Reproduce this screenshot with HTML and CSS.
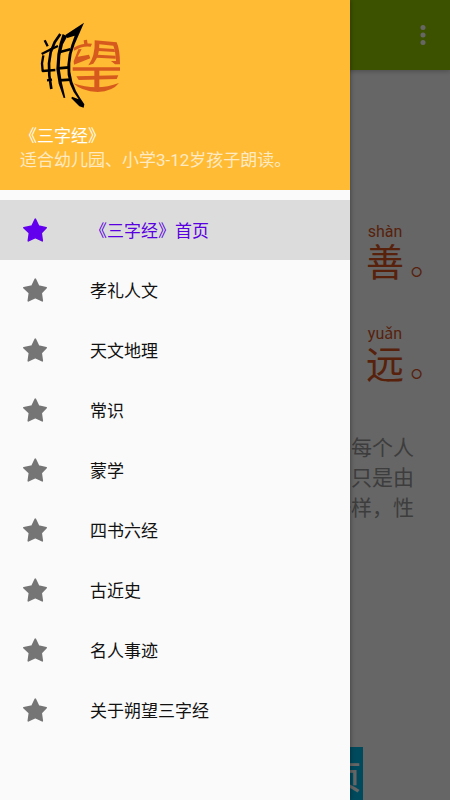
FILE: index.html
```html
<!DOCTYPE html>
<html lang="zh-CN">
<head>
<meta charset="utf-8">
<meta name="viewport" content="width=device-width, initial-scale=1">
<title>三字经</title>
<link rel="stylesheet" href="styles.css">
</head>
<body>
<div class="screen">
  <div class="page">
    <header class="appbar">
      <button class="more" type="button" aria-label="更多">
        <svg viewBox="0 0 6 20" width="6" height="20"><circle cx="3" cy="2.5" r="2.5"/><circle cx="3" cy="10" r="2.5"/><circle cx="3" cy="17.5" r="2.5"/></svg>
      </button>
    </header>
    <main class="lesson">
      <div class="verse"><span class="char"><span class="pinyin">shàn</span><span>善</span></span><span class="stop">。</span></div>
      <div class="verse"><span class="char"><span class="pinyin">yuǎn</span><span>远</span></span><span class="stop">。</span></div>
      <p class="note">每个人<br>只是由<br>一样，性</p>
    </main>
    <button class="home" type="button">首页</button>
  </div>
  <div class="scrim"></div>
  <aside class="drawer">
    <div class="head">
      <svg class="logo" viewBox="30 15 240 270" role="img" aria-label="朔望">
        <g fill="#000">
          <path d="M162 23L147 58L134 88L125 116L121 145L121 170L127 200L138 228L150 248L163 268L161 278L148 274L124 250L126 245L146 253L131 231L120 207L113 180L112 150L116 118L124 90L134 62L112 69L106 60Z"/>
          <path d="M98 57L112 64L99 88L91 122L89 160L96 205L106 248L101 249L86 206L79 162L82 118L89 84Z"/>
        </g>
        <g fill="none" stroke="#000" stroke-linejoin="round">
          <path stroke-width="8" d="M87 112L121 103M84 160L117 157"/>
          <path stroke-width="8" d="M87 196L122 194"/>
          <path stroke-width="8" d="M91 57L74 82L62 112L57 145L58 182L64 222"/>
          <path stroke-width="7" d="M44 76L53 94M35 117L60 104L84 93M40 121L36 145L38 168L76 165M51 196L66 194"/>
        </g>
        <g fill="#d65a1e">
          <path d="M161 76L171 74L173 88L163 90Z"/>
          <path d="M131 98Q158 83 186 86L182 95Q158 91 132 107Z"/>
          <path d="M145 103L155 102L143 125L177 119L181 130L132 149L131 139Z"/>
          <path d="M194 76L260 82Q270 103 270 148L255 148L243 138L258 138Q256 106 250 92L208 88Q209 123 190 146L175 151Q196 124 194 76Z"/>
          <path d="M205 99L253 102L255 111L204 108Z"/>
          <path d="M202 119L257 122L257 131L199 128Z"/>
          <path d="M128 157H270V167H128Z"/>
          <path d="M139 184L265 181L260 192L146 195Z"/>
          <path d="M193 161H208V222H193Z"/>
          <path d="M130 205Q202 229 267 204Q248 229 203 231Q154 229 130 205Z"/>
        </g>
      </svg>
      <div class="title">《三字经》</div>
      <div class="subtitle">适合幼儿园、小学3-12岁孩子朗读。</div>
    </div>
    <svg class="defs" aria-hidden="true"><symbol id="star" viewBox="0 0 26 26"><path d="M13.3 2.2L16.6 9L24.2 10.700L19.200 15.900L20.300 23.900L13.300 20.600L6.300 23.900L7.400 15.900L1.800 10.700L10 9Z" stroke-width="1.600" stroke-linejoin="round" stroke="currentColor" fill="currentColor"/></symbol></svg>
    <nav class="menu">
      <a class="item active" href="#home" aria-current="page"><svg class="star"><use href="#star"/></svg><span>《三字经》首页</span></a>
      <a class="item" href="#a"><svg class="star"><use href="#star"/></svg><span>孝礼人文</span></a>
      <a class="item" href="#b"><svg class="star"><use href="#star"/></svg><span>天文地理</span></a>
      <a class="item" href="#c"><svg class="star"><use href="#star"/></svg><span>常识</span></a>
      <a class="item" href="#d"><svg class="star"><use href="#star"/></svg><span>蒙学</span></a>
      <a class="item" href="#e"><svg class="star"><use href="#star"/></svg><span>四书六经</span></a>
      <a class="item" href="#f"><svg class="star"><use href="#star"/></svg><span>古近史</span></a>
      <a class="item" href="#g"><svg class="star"><use href="#star"/></svg><span>名人事迹</span></a>
      <a class="item" href="#h"><svg class="star"><use href="#star"/></svg><span>关于朔望三字经</span></a>
    </nav>
  </aside>
</div>
</body>
</html>
```
FILE: styles.css
```css
* { box-sizing: border-box; }
body {
  margin: 0;
  font-family: Roboto, "Noto Sans CJK SC", sans-serif;
}
button { border: 0; font: inherit; }
.screen {
  position: relative;
  height: 100vh;
  overflow: hidden;
}
.page {
  min-height: 100%;
  display: flex;
  flex-direction: column;
  background: #fff;
}
.appbar {
  height: 70px;
  flex: none;
  display: flex;
  align-items: center;
  justify-content: flex-end;
  padding: 0 16px;
  background: #99cc00;
  box-shadow: 0 2px 4px rgba(0, 0, 0, .2);
}
.more {
  display: flex;
  padding: 8px;
  background: none;
  fill: #fff;
}
.lesson {
  flex: none;
  height: 677px;
  padding: 150px 6px 0;
}
.verse {
  display: flex;
  justify-content: flex-end;
  align-items: flex-end;
  gap: 6px;
  height: 102px;
  padding-bottom: 38px;
  font-size: 38px;
  line-height: 42px;
  color: #d9541e;
}
.char {
  display: flex;
  flex-direction: column;
  align-items: center;
}
.pinyin {
  font-size: 16px;
  line-height: 20px;
}
.stop {
  font-size: 34px;
  font-weight: 300;
}
.note {
  margin: 9px 30px 0 0;
  font-size: 21px;
  line-height: 30px;
  text-align: right;
  color: #999;
}
.home {
  align-self: center;
  width: 276px;
  height: 60px;
  padding: 0 2px 4px;
  background: #00b8e8;
  color: #fff;
  font-size: 32px;
  font-weight: 500;
  text-align: right;
}
.scrim {
  position: absolute;
  inset: 0;
  background: rgba(0, 0, 0, .6);
}
.drawer {
  position: absolute;
  inset: 0 auto 0 0;
  width: calc(100% - 100px);
  max-width: 350px;
  background: #fafafa;
  box-shadow: 1px 0 4px rgba(0, 0, 0, .3);
}
.head {
  padding: 20px 20px 18px;
  background: #ffbb33;
  color: #fff;
  font-size: 17px;
  line-height: 24px;
}
.logo {
  display: block;
  width: 80px;
  height: 90px;
  margin: 0 0 14px 20px;
}
.subtitle { opacity: .7; }
.defs { display: none; }
.menu { padding: 10px 0; }
.item {
  display: flex;
  align-items: center;
  gap: 42px;
  height: 60px;
  padding: 0 22px;
  color: #111;
  font-size: 17px;
  text-decoration: none;
}
.item span { padding-bottom: 2px; }
.star {
  width: 26px;
  height: 26px;
  color: #757575;
}
.active { background: #dcdcdc; color: #5a00e0; }
.active .star { color: #6200ee; }
```
